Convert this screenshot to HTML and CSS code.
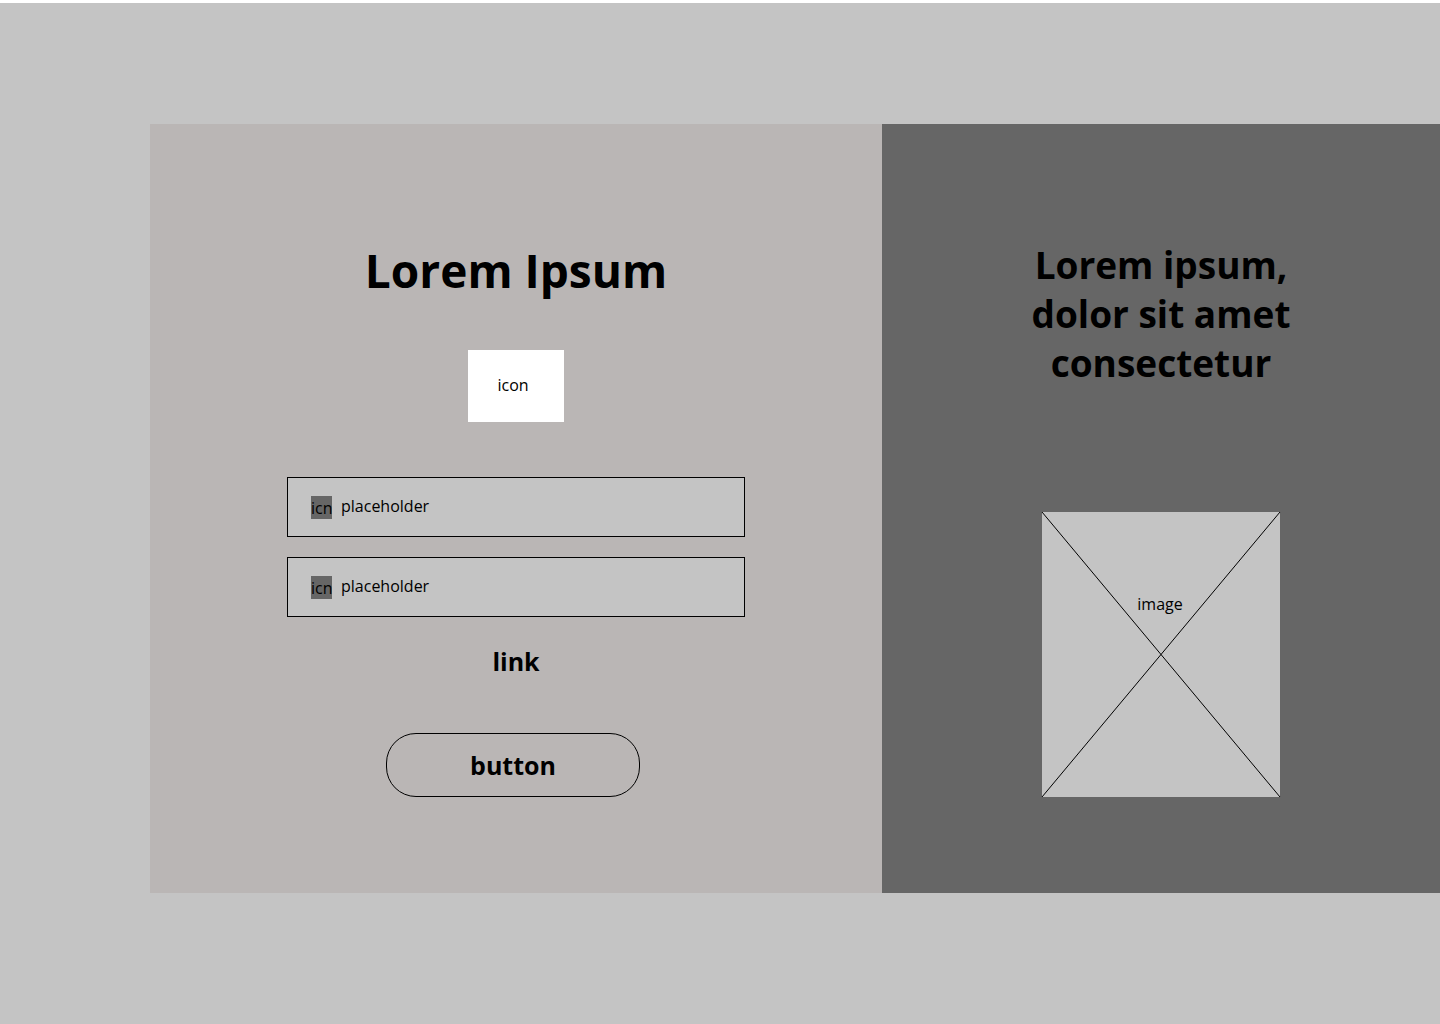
FILE: index.html
```html
<!DOCTYPE html>
<html lang="en">
<head>
<meta charset="utf-8">
<meta name="viewport" content="width=device-width, initial-scale=1">
<title>Lorem Ipsum</title>
<link rel="stylesheet" href="styles.css">
</head>
<body>
<main class="page">
  <div class="card">
    <form class="login">
      <h1 class="login-title">Lorem Ipsum</h1>
      <div class="logo">icon</div>
      <div class="fields">
        <div class="field">
          <label class="field-icon" for="first">icn</label>
          <input class="field-input" id="first" type="text" placeholder="placeholder">
        </div>
        <div class="field">
          <label class="field-icon" for="second">icn</label>
          <input class="field-input" id="second" type="text" placeholder="placeholder">
        </div>
      </div>
      <a class="link" href="#">link</a>
      <button class="button" type="button">button</button>
    </form>
    <section class="promo">
      <h2 class="promo-title">Lorem ipsum,<br>dolor sit amet<br>consectetur</h2>
      <div class="image">
        <svg class="image-cross" viewBox="0 0 238 285" preserveAspectRatio="none" aria-hidden="true">
          <path d="M0 0L238 285M238 0L0 285" stroke="#000" fill="none"/>
        </svg>
        <span class="image-label">image</span>
      </div>
    </section>
  </div>
</main>
</body>
</html>
```
FILE: styles.css
```css
* {
  box-sizing: border-box;
}

body {
  margin: 0;
  background: #fff;
  color: #000;
  font: 16px/24px "Open Sans", sans-serif;
}

.page {
  min-height: calc(100vh - 3px);
  margin-top: 3px;
  padding: 121px 0 121px 150px;
  background: #c4c4c4;
  display: flow-root;
}

.card {
  display: grid;
  grid-template-columns: 732fr 558fr;
}

.login {
  display: flex;
  flex-direction: column;
  align-items: center;
  padding: 116px 24px 96px;
  background: #bab6b5;
}

.login-title,
.promo-title,
.link,
.button {
  font-family: "Open Sans", sans-serif;
  font-weight: 700;
}

.login-title {
  margin: 0;
  font-size: 46px;
  line-height: 60px;
}

.logo {
  display: flex;
  align-items: center;
  justify-content: center;
  width: 96px;
  height: 72px;
  margin-top: 50px;
  padding: 0 6px 2px 0;
  background: #fff;
}

.fields {
  display: grid;
  gap: 20px;
  width: 100%;
  max-width: 458px;
  margin-top: 55px;
}

.field {
  display: flex;
  align-items: center;
  gap: 9px;
  height: 60px;
  padding: 0 23px;
  border: 1px solid #000;
  background: #c4c4c4;
}

.field-icon {
  width: 21px;
  height: 23px;
  background: #666;
}

.field-input {
  flex: 1;
  min-width: 0;
  padding: 0 0 2px;
  border: 0;
  background: none;
  color: #000;
  font: inherit;
}

.field-input::placeholder {
  color: #000;
  opacity: 1;
}

.link {
  margin-top: 28px;
  color: #000;
  font-size: 25px;
  line-height: 32px;
  text-decoration: none;
}

.button {
  width: 254px;
  height: 64px;
  margin: 56px 6px 0 0;
  border: 1px solid #000;
  border-radius: 30px;
  background: none;
  color: #000;
  font-size: 25px;
  line-height: 32px;
}

.promo {
  display: flex;
  flex-direction: column;
  align-items: center;
  justify-content: space-between;
  padding: 116px 24px 96px;
  background: #666;
}

.promo-title {
  margin: 0;
  font-size: 37px;
  line-height: 49px;
  text-align: center;
}

.image {
  display: grid;
  width: 238px;
  height: 285px;
  background: #c4c4c4;
}

.image-cross,
.image-label {
  grid-area: 1 / 1;
}

.image-cross {
  width: 100%;
  height: 100%;
  overflow: visible;
}

.image-label {
  justify-self: center;
  padding: 80px 2px 0 0;
}
```
